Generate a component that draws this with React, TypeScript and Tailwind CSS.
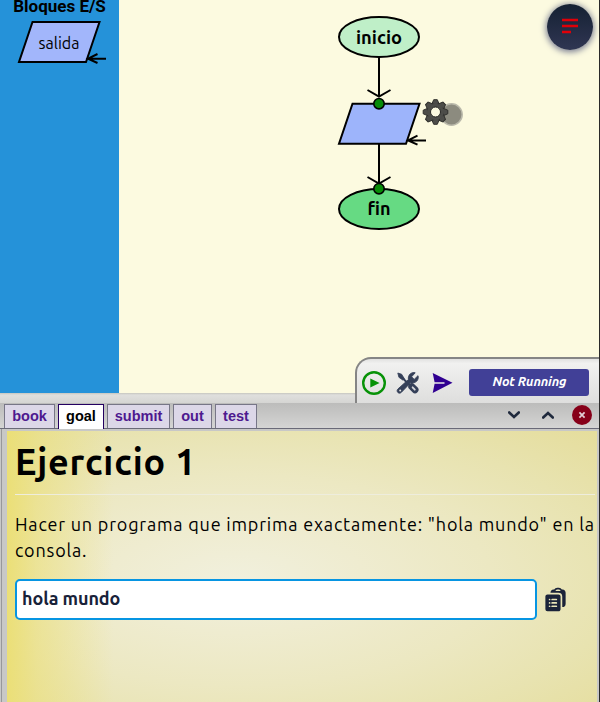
import React from "react";
import { HiClipboardDocumentList } from "react-icons/hi2";

const uiFont = "font-['Ubuntu','Noto_Sans',sans-serif]";

function Arrow({ y }: { y: number }) {
  return (
    <path d={`M379 ${y}v40M367.5 ${y + 33}L379 ${y + 39.5}L390.5 ${y + 33}`} fill="none" stroke="#000" strokeWidth="2" />
  );
}

function OutputShape({ x, y, fill }: { x: number; y: number; fill: string }) {
  return (
    <g transform={`translate(${x} ${y})`} stroke="#000" strokeWidth="2">
      <path d="M14 0H81L67.5 40H0.5Z" fill={fill} />
      <path d="M87.5 36.7H70M79 32L69.5 36.7L79 41" fill="none" />
    </g>
  );
}

const teeth = [0, 45, 90, 135, 180, 225, 270, 315];

function Gear() {
  return (
    <g transform="translate(435.5 112)">
      <g fill="#4d4d49" stroke="#30302d" strokeWidth="1">
        {teeth.map((a) => (
          <path key={a} d="M-4 -7L-1.8 -12.3H1.8L4 -7Z" transform={`rotate(${a})`} />
        ))}
      </g>
      <circle r="8.3" fill="#4d4d49" />
      <circle r="5" fill="#fbf9e0" stroke="#272725" strokeWidth="1" />
    </g>
  );
}

function Diagram() {
  return (
    <svg className="absolute inset-0 block" width="600" height="393" viewBox="0 0 600 393">
      <OutputShape x={18.5} y={22} fill="#a2b6fb" />
      <text x="59" y="48.5" textAnchor="middle" textLength="41" lengthAdjust="spacingAndGlyphs" fontSize="16" className={uiFont}>salida</text>
      <ellipse cx="379" cy="37" rx="40" ry="20" fill="#bfefc8" stroke="#000" strokeWidth="2" />
      <text x="379" y="43.5" textAnchor="middle" fontSize="18" fontWeight="700" textLength="46" lengthAdjust="spacingAndGlyphs" className={uiFont}>inicio</text>
      <Arrow y={57} />
      <OutputShape x={338.5} y={103.7} fill="#9db4fb" />
      <Arrow y={144} />
      <ellipse cx="379" cy="209" rx="40" ry="20" fill="#66da83" stroke="#000" strokeWidth="2" />
      <text x="379" y="215" textAnchor="middle" fontSize="18" fontWeight="700" textLength="23" lengthAdjust="spacingAndGlyphs" className={uiFont}>fin</text>
      <circle cx="379" cy="103.7" r="5.2" fill="#078b07" stroke="#000" strokeWidth="1.6" />
      <circle cx="379" cy="188.7" r="5.2" fill="#078b07" stroke="#000" strokeWidth="1.6" />
      <circle cx="451.5" cy="114.5" r="10.7" fill="#8c8b7f" stroke="#bab9ab" strokeWidth="1.5" />
      <Gear />
    </svg>
  );
}

function PlayIcon() {
  return (
    <svg className="block size-6" viewBox="0 0 24 24">
      <circle cx="12" cy="12" r="10.8" fill="none" stroke="#079207" strokeWidth="2.4" />
      <path d="M8.3 7.5L17.6 12L8.3 16.5Z" fill="#079207" />
    </svg>
  );
}

function ToolsIcon() {
  return (
    <svg className="block size-6" viewBox="0 0 24 24" fill="none">
      <path d="M1.8 2L5.6 3.2L8.3 7.6L6.8 9.1L2.9 6.3Z" fill="#343f58" stroke="#343f58" strokeWidth="0.8" strokeLinejoin="round" />
      <path d="M6 6.5L15.5 16" stroke="#343f58" strokeWidth="2" />
      <path d="M15.8 15.6L19 18.8" stroke="#343f58" strokeWidth="7" strokeLinecap="round" />
      <path d="M16.6 16.3L18.8 18.7" stroke="#d5d6da" strokeWidth="1.8" strokeLinecap="round" />
      <path d="M19.2 1.8C15.8.8 11.7 3.5 12.4 8.6L2 17.9C-.4 20.1 2.7 23.8 5.4 21.3L14.6 11.7C19.7 13 23.3 8.7 22 4.7L18.2 8.4L15.6 5.8Z" fill="#343f58" stroke="#343f58" strokeWidth="0.9" strokeLinejoin="round" />
      <circle cx="4.2" cy="19.6" r="1" fill="#e5e5e4" />
    </svg>
  );
}

function SendIcon() {
  return (
    <svg className="block h-5 w-[21px]" viewBox="0 0 21 20">
      <path d="M.7 0L20.5 9.8L.7 20L2.6 10.8H12.5V9.2H2.6Z" fill="#300091" />
    </svg>
  );
}

function Toolbar() {
  return (
    <div className="absolute left-[355px] top-[357px] flex h-[46px] w-[244px] items-center rounded-tl-[16px] border-l-2 border-t-2 border-[#858585] bg-gradient-to-b from-[#e2e2e1] via-[#f1f1f0] via-10% to-[#dededd] pl-[5px] pt-[4px]">
      <PlayIcon />
      <div className="ml-[10px]"><ToolsIcon /></div>
      <div className="ml-3"><SendIcon /></div>
      <div className={`ml-4 mb-[2px] flex h-[27px] w-[120px] items-center justify-center rounded-[3px] bg-[#414097] text-[13px] font-bold italic text-white ${uiFont}`}>
        <span className="-mt-px ml-px whitespace-nowrap tracking-[-0.1px]">Not Running</span>
      </div>
    </div>
  );
}

function Tab({ label, width, active = false }: { label: string; width: string; active?: boolean }) {
  return (
    <div className={`flex items-center justify-center border border-b-0 text-[14.5px] font-bold ${width} ${active ? "relative z-10 -mb-px h-[25px] border-[#240061] bg-white pb-px text-black" : "h-6 border-[#777687] bg-[#dcd7e8] text-[#4e198f]"}`}>
      {label}
    </div>
  );
}

function TabBar() {
  return (
    <div className="flex h-[26px] shrink-0 items-end border-b border-[#6a6a78] bg-gradient-to-b from-[#bcbcbb] via-[#c8c8c7] to-[#d5d5d4] pl-1">
      <div className="flex items-end gap-[3px] font-['Liberation_Sans',sans-serif]">
        <Tab label="book" width="w-[51px]" />
        <Tab label="goal" width="w-[46px]" active />
        <Tab label="submit" width="w-[63px]" />
        <Tab label="out" width="w-[39px]" />
        <Tab label="test" width="w-[42px]" />
      </div>
      <div className="ml-auto mr-[7px] flex items-center pb-[3px]">
        <svg className="mr-[22px] h-2 w-3" viewBox="0 0 12 8" fill="none"><path d="M1.2 1.5L6 6L10.8 1.5" stroke="#202a3d" strokeWidth="2.6" strokeLinecap="round" /></svg>
        <svg className="mr-[18px] h-2 w-3" viewBox="0 0 12 8" fill="none"><path d="M1.2 6.5L6 2L10.8 6.5" stroke="#202a3d" strokeWidth="2.6" strokeLinecap="round" /></svg>
        <svg className="size-5" viewBox="0 0 20 20"><circle cx="10" cy="10" r="10" fill="#870019" /><path d="M7.4 7.4L12.6 12.6M12.6 7.4L7.4 12.6" stroke="#e3cfd6" strokeWidth="1.7" /></svg>
      </div>
    </div>
  );
}

function Goal() {
  return (
    <main className={`ml-[7px] mr-[2px] mt-[2px] h-[271px] bg-[radial-gradient(ellipse_at_39%_55%,#f1f0dd_0%,#efecd0_25%,#ece8c2_50%,#e8e3b0_75%,#e5dd9c_100%)] ${uiFont} text-black`}>
      <div className="h-full bg-gradient-to-r from-[#ebdf77] via-[#ebdf7799] via-5% to-transparent to-18% pl-2 pr-[2px] pt-[8px]">
        <h1 className="h-[48px] whitespace-nowrap text-[36px] font-bold leading-[45px] tracking-[0.8px]">Ejercicio 1</h1>
        <div className="mt-[7px] h-px bg-[#eeeddd]" />
        <p className="mt-4 text-[18px] leading-[26px] tracking-[0.8px]">
          <span className="whitespace-nowrap">Hacer un programa que imprima exactamente: "hola mundo" en la</span><br />consola.
        </p>
        <div className="mt-[16px] flex items-center">
          <div className="flex h-[41px] w-[522px] items-center rounded-[5px] border-2 border-[#0795e2] bg-white pb-[2px] pl-[5px] text-[18px] font-bold text-[#182239]">
            <span className="tracking-[-0.1px]">hola mundo</span>
          </div>
          <HiClipboardDocumentList className="ml-[5px] size-[27px] text-[#1b2339]" />
        </div>
      </div>
    </main>
  );
}

export default function App() {
  return (
    <div className="relative h-[702px] w-[600px] overflow-hidden border-r border-[#292929] bg-[#c8c8c7]">
      <div className="flex h-full flex-col">
        <section className="relative flex h-[393px] shrink-0 bg-[#fcfae0]">
          <aside className="w-[119px] bg-[#2592d9] text-center">
            <div className="-mt-[4px] whitespace-nowrap font-['Roboto',sans-serif] text-[17px] font-bold leading-5">Bloques E/S</div>
          </aside>
          <Diagram />
          <button className="absolute left-[547px] top-[4px] flex size-[46px] items-center justify-center rounded-full bg-gradient-to-b from-[#152133] to-[#303653] shadow-[0_1px_6px_1px_#777b91]" aria-label="Menu">
            <svg className="-mt-[2px] size-[18px]" viewBox="0 0 18 18"><path d="M1 3H17M1 9H17M1 15H10" stroke="#e00008" strokeWidth="2.6" /></svg>
          </button>
        </section>
        <div className="h-[10px] shrink-0 bg-gradient-to-b from-[#c6c6bf] via-[#dfdfdd] via-20% to-[#d5d5d3]" />
        <TabBar />
        <div className="ml-px h-[273px] border-l border-[#98989a]"><div className="-ml-[2px]"><Goal /></div></div>
      </div>
      <Toolbar />
    </div>
  );
}
